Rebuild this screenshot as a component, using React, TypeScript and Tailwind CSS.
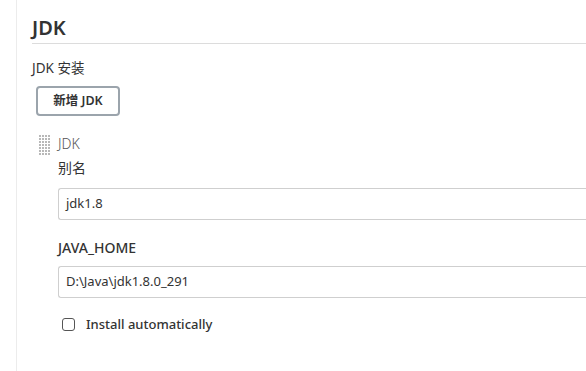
import React from "react";

const font = { fontFamily: '"Noto Sans", "Noto Sans CJK SC", sans-serif' };

function DragHandle() {
  const dots = [];
  for (let r = 0; r < 7; r++) {
    for (let c = 0; c < 4; c++) {
      dots.push(<rect key={`${r}-${c}`} x={c * 3} y={r * 3} width={2} height={2} fill="#b8b8b8" />);
    }
  }
  return (
    <svg width="12" height="21" viewBox="0 0 12 21">
      {dots}
    </svg>
  );
}

export default function App() {
  return (
    <div className="w-[586px] h-[371px] bg-white overflow-hidden flex text-[#333]" style={font}>
      <div className="w-[17px] border-r border-[#ececec] shrink-0" />
      <div className="flex-1 pl-[15px] pt-[15px]">
        <h2 className="text-[20px] font-semibold leading-[26px] pb-[2px] border-b border-[#dcdcdc]">JDK</h2>
        <div className="mt-[14px] text-[13.5px] leading-[20px]">JDK 安装</div>
        <button className="mt-[8px] ml-[4px] w-[84px] h-[30px] border-2 border-[#9ba4ac] rounded-[4px] text-[12.5px] font-semibold text-[#333] bg-white flex items-center justify-center">
          新增 JDK
        </button>
        <div className="mt-[18px] flex">
          <div className="w-[26px] pl-[7px] pt-[1px] shrink-0">
            <DragHandle />
          </div>
          <div className="flex-1">
            <div className="text-[14px] leading-[20px] text-[#555] font-light">JDK</div>
            <div className="mt-[4px] text-[14px] leading-[20px]">别名</div>
            <div className="mt-[10px] h-[32px] border border-[#cfcfcf] border-r-0 rounded-l-[3px] flex items-center pl-[7px] text-[13px]">jdk1.8</div>
            <div className="mt-[18px] text-[14px] leading-[20px] font-medium">JAVA_HOME</div>
            <div className="mt-[8px] h-[32px] border border-[#cfcfcf] border-r-0 rounded-l-[3px] flex items-center pl-[7px] text-[13px]">D:\Java\jdk1.8.0_291</div>
            <label className="mt-[17px] ml-[4px] flex items-center gap-[11px]">
              <span className="w-[13px] h-[13px] border border-[#555] rounded-[3px] bg-white" />
              <span className="text-[13px] font-medium">Install automatically</span>
            </label>
          </div>
        </div>
      </div>
    </div>
  );
}
